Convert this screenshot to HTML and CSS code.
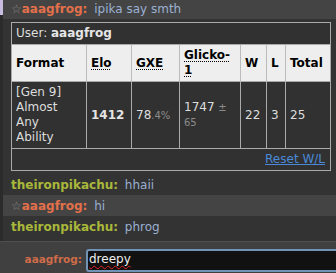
FILE: index.html
```html
<!DOCTYPE html>
<html>
<head>
<meta charset="utf-8">
<link rel="stylesheet" href="styles.css">
</head>
<body>
<div class="app">
  <div class="logwrap">
    <div class="edge"></div>
    <div class="log">
      <div class="msg hl first"><span class="star">☆</span><strong class="frog">aaagfrog:</strong> <em>ipika say smth</em></div>
      <div class="msg boxmsg">
        <div class="box">
          <div class="user">User: <strong>aaagfrog</strong></div>
          <table class="rank">
            <colgroup>
              <col class="c-fmt"><col class="c-elo"><col class="c-gxe"><col class="c-gl"><col class="c-w"><col class="c-l"><col class="c-tot">
            </colgroup>
            <thead>
              <tr>
                <th class="fmt">Format</th>
                <th><abbr title="Elo rating">Elo</abbr></th>
                <th><abbr title="user's percentage chance of winning a random battle">GXE</abbr></th>
                <th><abbr title="Glicko-1 rating system">Glicko-1</abbr></th>
                <th>W</th>
                <th>L</th>
                <th>Total</th>
              </tr>
            </thead>
            <tbody>
              <tr>
                <td class="fmt">[Gen 9] Almost Any Ability</td>
                <td><strong>1412</strong></td>
                <td>78<small class="dim">.4%</small></td>
                <td>1747 <small class="dim">± 65</small></td>
                <td>22</td>
                <td>3</td>
                <td>25</td>
              </tr>
            </tbody>
          </table>
          <div class="foot"><a href="#" class="reset">Reset W/L</a></div>
        </div>
      </div>
      <div class="msg"><strong class="pika">theironpikachu:</strong> <em>hhaii</em></div>
      <div class="msg hl"><span class="star">☆</span><strong class="frog">aaagfrog:</strong> <em>hi</em></div>
      <div class="msg"><strong class="pika">theironpikachu:</strong> <em>phrog</em></div>
    </div>
  </div>
  <div class="composer">
    <label class="who">aaagfrog:</label>
    <div class="input"><span class="typo">dreepy</span></div>
  </div>
</div>
</body>
</html>
```

FILE: styles.css
```css
html, body {
  margin: 0;
  padding: 0;
  background: #333;
  overflow: hidden;
}
body {
  font-family: "DejaVu Sans", Verdana, sans-serif;
  font-size: 12px;
  color: #ddd;
}
.app {
  width: 336px;
  height: 273px;
  display: flex;
  flex-direction: column;
  overflow: hidden;
}
.logwrap {
  display: flex;
}
.edge {
  flex: 0 0 3px;
  background: linear-gradient(#c8bde0 0, #c8bde0 15px, #2b2b2b 15px);
}
.log {
  flex: 1;
  min-width: 0;
  padding-bottom: 4px;
  background: #333;
}
.msg {
  padding: 4px 5px 2px 8px;
  line-height: 15px;
  white-space: nowrap;
}
.msg.first {
  padding-top: 2px;
}
.hl {
  background: #444;
}
.star {
  color: #8a8a8a;
}
.frog {
  color: #e2714b;
}
.pika {
  color: #a9b83a;
}
.msg em {
  font-style: normal;
  color: #9bb0d2;
  padding: 1px 4px 1px 3px;
}
.boxmsg {
  padding: 3px 5px 3px 8px;
  white-space: normal;
}
.box {
  border: 1px solid #aaa;
  background: #313131;
}
.user {
  padding: 3px 4px;
  line-height: 15px;
  color: #ddd;
}
.user strong {
  color: #e6e6e6;
}
.rank {
  width: 100%;
  table-layout: fixed;
  border-collapse: separate;
  border-spacing: 0;
  border-top: 1px solid #aaa;
  border-bottom: 1px solid #aaa;
}
.c-fmt { width: 75px; }
.c-elo { width: 45px; }
.c-gxe { width: 48px; }
.c-gl { width: 61px; }
.c-w { width: 26px; }
.c-l { width: 19px; }
.c-tot { width: 44px; }
.rank th, .rank td {
  padding: 3px 4px;
  line-height: 15px;
  text-align: left;
  vertical-align: middle;
  border-right: 1px solid #aaa;
}
.rank th:last-child, .rank td:last-child {
  border-right: 0;
}
.rank th {
  background: #eee;
  color: #000;
  font-weight: bold;
  border-bottom: 1px solid #aaa;
  border-right-color: #bbb;
}
.rank .fmt {
  padding-right: 8px;
}
.rank td {
  color: #ddd;
}
.rank td strong {
  color: #e4e4e4;
}
abbr {
  text-decoration: underline dotted;
  text-underline-offset: 2px;
}
.dim {
  color: #8c8c8c;
  font-size: 10px;
}
.foot {
  padding: 3px 5px;
  line-height: 15px;
  text-align: right;
}
.reset {
  color: #4a89d8;
  text-decoration: underline;
}
.composer {
  flex: 1;
  display: flex;
  align-items: baseline;
  gap: 4px;
  border-top: 1px solid #4e4e4e;
  background: #404040;
  padding-top: 7px;
}
.who {
  flex: 0 0 82px;
  text-align: right;
  font-weight: bold;
  font-size: 10.5px;
  color: #cf6b48;
}
.input {
  flex: 0 0 300px;
  height: 18px;
  border: 2px solid #7193b6;
  border-right: 0;
  border-radius: 3px 0 0 3px;
  background: #111;
  padding: 1px 0 0 1px;
  box-sizing: content-box;
  line-height: 15px;
  font-size: 12px;
  color: #eee;
}
.typo {
  text-decoration: underline wavy #e02020;
  text-decoration-thickness: 1px;
  text-underline-offset: 2px;
}
```
